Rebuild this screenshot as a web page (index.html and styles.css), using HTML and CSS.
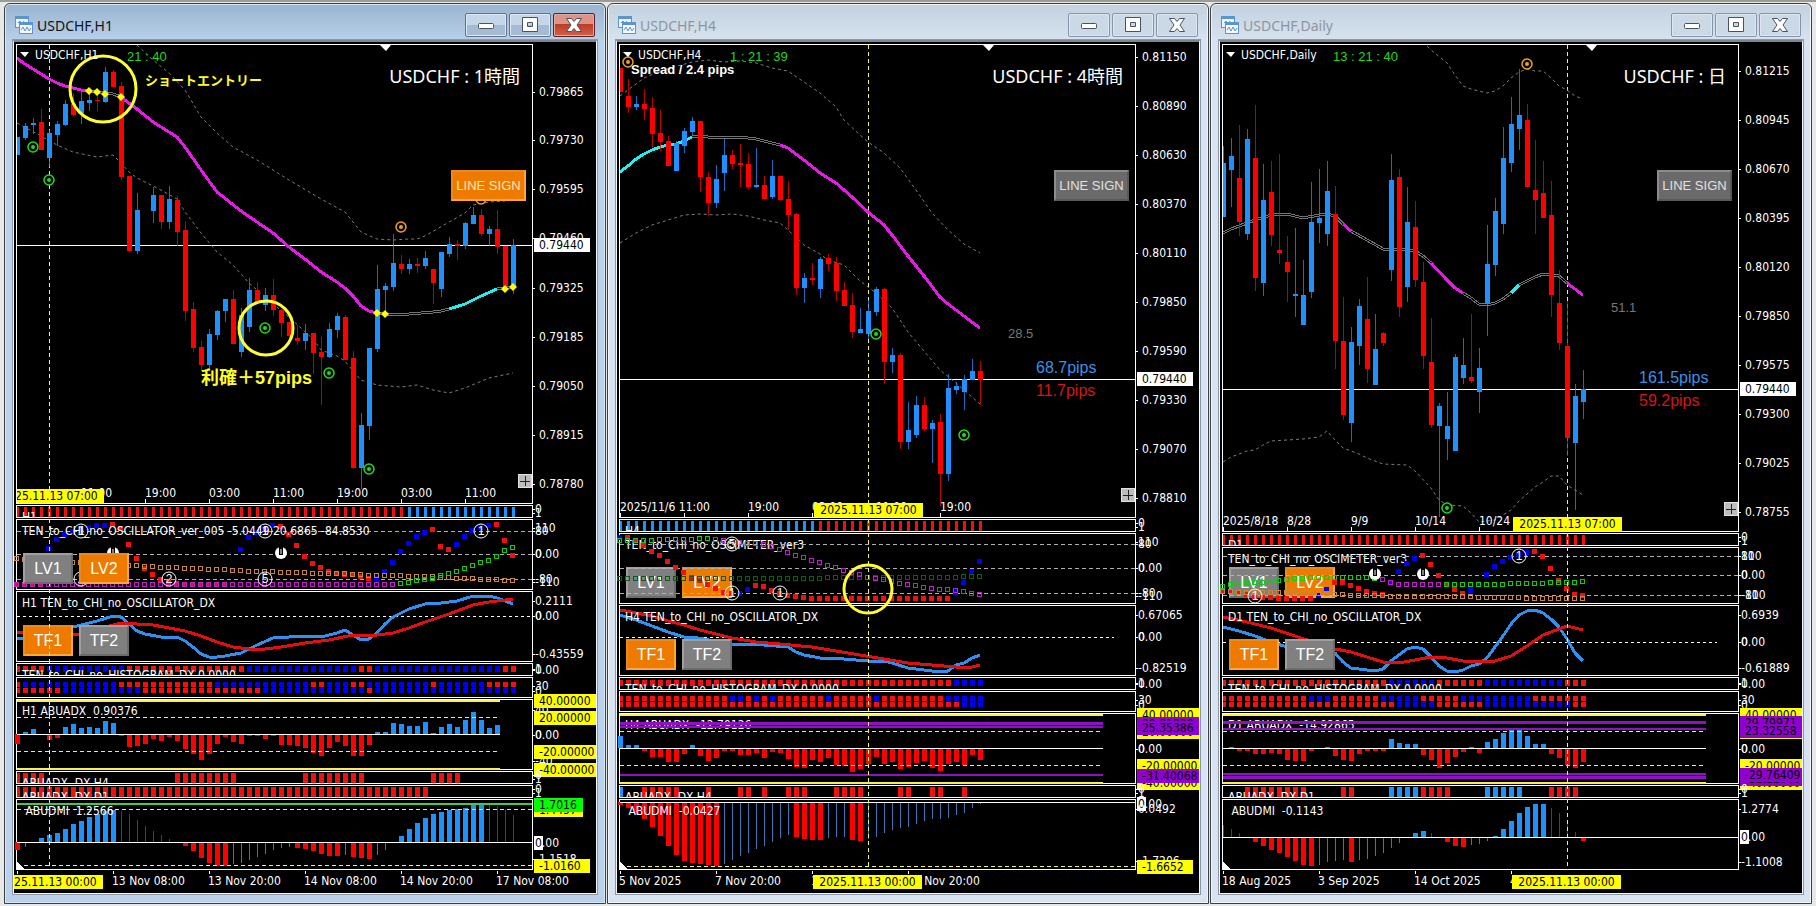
FILE: index.html
```html
<!DOCTYPE html>
<html lang="ja">

<head>
    <meta charset="UTF-8">
    <meta name="viewport" content="width=device-width, initial-scale=1.0">
    <title>USDCHF</title>
    <link rel="stylesheet" href="styles.css">
</head>

<body>
    <svg class="symbols" width="0" height="0" aria-hidden="true">
        <symbol id="icon-chart" viewBox="0 0 18 18">
            <rect x="0.5" y="0.5" width="13" height="11" fill="#eef5fd" stroke="#5b93d3" />
            <rect x="0" y="0" width="14" height="3" fill="#5b93d3" />
            <path d="M3 7l2-2 2 3 2-3" fill="none" stroke="#5b93d3" />
            <rect x="4.5" y="6.5" width="13" height="11" fill="#f6faff" stroke="#5b93d3" />
            <rect x="4" y="6" width="14" height="3" fill="#5b93d3" />
            <path d="M6 14l2-3 2 4 2-4 2 4 2-3" fill="none" stroke="#5b93d3" />
        </symbol>
        <symbol id="icon-min" viewBox="0 0 18 18">
            <rect x="1.5" y="7.5" width="15" height="5" rx="1" fill="#fff" stroke="#4a5262" />
        </symbol>
        <symbol id="icon-max" viewBox="0 0 18 18">
            <path d="M1.500 1.500h15v14h-15zM6.500 6.500v4h5v-4z" fill="#fff" fill-rule="evenodd" stroke="#4a5262" />
        </symbol>
        <symbol id="icon-close" viewBox="0 0 18 18">
            <path d="M1.500 2.500h5l2.500 3 2.500-3h5l-4.500 6.500 4.500 6.500h-5l-2.500-3-2.500 3h-5l4.500-6.500z" fill="#fff" stroke="#4a5262" stroke-linejoin="round" />
        </symbol>
    </svg>

    <main class="desktop">
        <section class="window active">
            <header class="titlebar">
                <svg class="app-icon"><use href="#icon-chart" /></svg>
                <h2>USDCHF,H1</h2>
                <div class="window-buttons">
                    <button type="button" aria-label="Minimize"><svg><use href="#icon-min" /></svg></button>
                    <button type="button" aria-label="Maximize"><svg><use href="#icon-max" /></svg></button>
                    <button type="button" class="close" aria-label="Close"><svg><use href="#icon-close" /></svg></button>
                </div>
            </header>
            <div class="chart" id="chart-h1"></div>
        </section>

        <section class="window">
            <header class="titlebar">
                <svg class="app-icon"><use href="#icon-chart" /></svg>
                <h2>USDCHF,H4</h2>
                <div class="window-buttons">
                    <button type="button" aria-label="Minimize"><svg><use href="#icon-min" /></svg></button>
                    <button type="button" aria-label="Maximize"><svg><use href="#icon-max" /></svg></button>
                    <button type="button" class="close" aria-label="Close"><svg><use href="#icon-close" /></svg></button>
                </div>
            </header>
            <div class="chart" id="chart-h4"></div>
        </section>

        <section class="window">
            <header class="titlebar">
                <svg class="app-icon"><use href="#icon-chart" /></svg>
                <h2>USDCHF,Daily</h2>
                <div class="window-buttons">
                    <button type="button" aria-label="Minimize"><svg><use href="#icon-min" /></svg></button>
                    <button type="button" aria-label="Maximize"><svg><use href="#icon-max" /></svg></button>
                    <button type="button" class="close" aria-label="Close"><svg><use href="#icon-close" /></svg></button>
                </div>
            </header>
            <div class="chart" id="chart-d1"></div>
        </section>
    </main>

    <script src="data.js"></script>
    <script src="chart.js"></script>
</body>

</html>
```
FILE: styles.css
```css
* {
    box-sizing: border-box;
}

body {
    margin: 0;
    font-family: "DejaVu Sans Condensed", "Noto Sans", "Noto Sans CJK JP", sans-serif;
    font-size: 12px;
    color: #fff;
    background-color: #e8e8e6;
    border-top: 2px solid #9c9c96;
}

.symbols {
    position: absolute;
}

.desktop {
    display: grid;
    grid-template-columns: repeat(3, 1fr);
    gap: 1px;
    min-height: calc(100vh - 2px);
    padding: 1px 4px 2px;
}

/* window frame */

.window {
    display: flex;
    flex-direction: column;
    min-width: 0;
    padding: 0 8px 9px;
    background-color: #d7e3f0;
    border: 1px solid #3c3f44;
    border-radius: 6px 6px 0 0;
    background-image: linear-gradient(#c3d0de, #d7e3f0 38px);
    box-shadow: inset 0 0 0 1px #f0f5fa;
}

.window.active {
    background-color: #b9d1ea;
    background-image: linear-gradient(#9ab4d0, #b9d1ea 38px);
    box-shadow: inset 0 0 0 1px #d9e8f6;
}

.titlebar {
    display: flex;
    align-items: center;
    height: 36px;
    padding: 6px 2px 0 2px;
}

.app-icon {
    width: 18px;
    height: 18px;
}

.titlebar h2 {
    flex: 1;
    margin: 0 0 0 4px;
    font-family: "Noto Sans", sans-serif;
    font-size: 14px;
    font-weight: normal;
    color: #8d969f;
}

.active .titlebar h2 {
    color: #101418;
}

.window-buttons {
    display: flex;
    gap: 2px;
}

.window-buttons button {
    display: flex;
    align-items: center;
    justify-content: center;
    width: 42px;
    height: 24px;
    padding: 0;
    background: #cbd8e6;
    border: 1px solid #8595aa;
    border-radius: 2px;
    box-shadow: inset 0 0 0 1px #dfe8f2;
}

.active .window-buttons button {
    background: linear-gradient(#c4d6e8 50%, #a3bbd4 50%);
    border-color: #60738e;
}

.active .window-buttons .close {
    background: linear-gradient(#dc9488 45%, #bc3a26 45%, #cf6248);
    border-color: #5e2024;
    box-shadow: inset 0 0 0 1px #e2a79d;
}

.window-buttons svg {
    width: 18px;
    height: 18px;
}

/* chart area */

.chart {
    position: relative;
    flex: 1;
    display: flex;
    flex-direction: column;
    gap: 1px;
    padding: 2px 0 0 2px;
    background-color: #000;
    border: 1px solid #f4f8fc;
    border-top: 2px solid #7d858f;
    outline: 1px solid #8d98a6;
    overflow: hidden;
}

.indicators {
    position: relative;
    display: flex;
    flex-direction: column;
    gap: 1px;
}

.panel {
    display: grid;
    grid-template-columns: 1fr 63px;
}

.panel.price {
    flex: 1;
}

.plot {
    position: relative;
    min-width: 0;
    border: 1px solid #fff;
}

.price .plot,
.strip .plot {
    overflow: hidden;
}

.plot svg,
.scale svg,
.time-axis svg {
    position: absolute;
    top: 0;
    left: 0;
    width: 100%;
    height: 100%;
    overflow: visible;
    pointer-events: none;
}

.scale,
.time-axis {
    position: relative;
}

.time-axis {
    height: 22px;
}

.times {
    position: absolute;
    left: 0;
    right: 0;
    bottom: 0;
    height: 14px;
}

.panel-title {
    position: absolute;
    top: 2px;
    left: 5px;
    line-height: 18px;
    white-space: pre;
}

.pair-name {
    position: absolute;
    top: 18px;
    right: 12px;
    font-family: "Noto Sans", "Noto Sans CJK JP", sans-serif;
    font-size: 18px;
    line-height: 26px;
}

.crosshair {
    position: absolute;
    top: 0;
    bottom: 0;
    width: 1px;
    z-index: 2;
    background: repeating-linear-gradient(#f4f46a 0 4px, transparent 4px 7px);
}

.time-tag {
    position: absolute;
    z-index: 3;
    bottom: 0;
    width: 109px;
    line-height: 14px;
    text-align: center;
    white-space: nowrap;
    color: #000;
    background-color: #ff0;
}

.time-axis .time-tag {
    bottom: 4px;
}

/* buttons on the chart */

.chart-button {
    width: 50px;
    height: 31px;
    padding: 0;
    font-family: "Liberation Sans", sans-serif;
    font-size: 16px;
    color: #fff;
    background-color: #808080;
    border: 2px solid;
    border-color: #a0a0a0 #6c6c6c #6c6c6c #a0a0a0;
}

.chart-button.on {
    background-color: #ee7b00;
    border-color: #e88a1c #ffa836 #ffa836 #e88a1c;
}

.controls {
    position: absolute;
    left: 6px;
    bottom: 5px;
    z-index: 1;
    display: flex;
    gap: 6px;
}

.controls.front {
    z-index: 3;
}

.controls.back {
    z-index: auto;
}

.line-sign {
    position: absolute;
    top: 125px;
    right: 6px;
    width: 75px;
    font-size: 13px;
    color: #e0e0e0;
    background-color: #6a6a6a;
    border-color: #8c8c8c #585858 #585858 #8c8c8c;
}

.line-sign.on {
    color: #ffe6b8;
}

.expand {
    position: absolute;
    right: 0;
    bottom: 15px;
    width: 14px;
    height: 14px;
    padding: 0;
    border: 1px solid #e0e0e0;
    background: linear-gradient(#222, #222) center / 10px 1px no-repeat,
        linear-gradient(#222, #222) center / 1px 10px no-repeat, #bdbdbd;
}

/* svg text */

text {
    fill: #fff;
    white-space: pre;
}

.on-tag {
    fill: #000;
}

.countdown {
    font: 13px "Liberation Sans", sans-serif;
    fill: #22d822;
}

.spread {
    font: bold 13px "Liberation Sans", sans-serif;
}

.strength {
    font: 13px "Liberation Sans", sans-serif;
    fill: #787878;
}

.pips-up,
.pips-down {
    font: 16px "Liberation Sans", sans-serif;
    fill: #3a90e8;
}

.pips-down {
    fill: #d81414;
}

.entry,
.profit {
    font: bold 13px "Noto Sans CJK JP", sans-serif;
    fill: #ffff20;
}

.profit {
    font: bold 18px "Liberation Sans", "Noto Sans CJK JP", sans-serif;
}

.mark {
    font: 12px "Liberation Sans", sans-serif;
    text-anchor: middle;
}
```
FILE: data.js
```js
// Levels are counted downwards, three steps to a pixel.
// Candles: direction, high, body top, body bottom, low.
// Runs: "r4 b10 .2" is four red bars, ten blue bars, two empty ones.

const charts = [
    {
        id: 'chart-h1',
        name: 'USDCHF,H1',
        pair: 'USDCHF : 1時間',
        countdown: '21 : 40',
        lineSign: true,
        cross: 4,
        price: 736,
        candles: `u 411 411 464 464,u 368 378 413 420,u 354 370 374 402,d 327 366 450 450,u 390 399 474 500,
            u 363 372 405 438,u 301 312 375 378,d 278 312 345 348,u 275 303 339 372,u 280 300 308 333,
            d 283 300 303 333,u 201 216 305 308,d 210 216 261 261,d 246 258 531 540,d 528 528 753 756,
            u 579 630 753 762,,u 561 585 633 669,d 585 585 665 687,u 558 597 665 687,d 588 600 696 738,
            d 663 690 933 963,d 906 927 1044 1056,d 1023 1041 1095 1113,u 987 1002 1095 1113,u 930 933 1005 1020,
            u 897 897 933 966,d 870 897 1032 1032,u 924 945 1056 1071,u 834 870 981 995,d 846 870 906 910,
            u 864 885 915 933,d 837 885 930 948,d 927 930 969 1011,d 966 966 1008 1023,d 975 1014 1023 1035,
            u 972 999 1023 1050,d 999 999 1059 1122,d 1011 1056 1071 1215,u 969 987 1071 1074,u 939 948 990 1014,
            d 945 951 1080 1080,d 1053 1074 1404 1407,u 1239 1275 1404 1467,u 1044 1044 1278 1320,u 795 867 1047 1056,
            u 850 858 870 940,u 702 788 861 873,d 765 792 807 822,u 777 792 807 822,d 774 792 797 819,
            u 753 774 798 807,d 807 807 849 912,u 757 757 867 891,u 711 733 762 770,d 720 732 739 780,
            u 666 669 738 747,u 621 645 672 672,d 627 645 702 708,u 678 687 702 738,d 630 687 741 762,
            d 738 738 861 870,u 717 735 858 882`,
        average: [
            ['m', '0:175 1:192 2:207 3:222 4:237 5:250 6:258 7:265 8:270 9:273'],
            ['g', '9:273 10:277 11:280 12:281 13:292'],
            ['m', '13:292 15:328 17:367 20:410 21:440 23:510 25:575 28:633 32:700 34:742 36:776 38:817 40:845 41:863 42:888 43:917 44:933 45:938'],
            ['g', '45:938 46:943 49:941 52:937 53:932 54:926'],
            ['c', '54:926 56:912 58:888 60:868'],
            ['g', '60:868 62:861']
        ],
        bands: [
            '15:135 17:180 19:220 21:270 23:352 25:400 27:440 30:480 34:540 38:598 41:635 42:665 43:695 45:718 47:720 49:716 50:718 51:708 54:665 56:640 57:615 59:605 61:603',
            '0:370 3:408 5:435 7:457 10:470 12:466 13:490 14:515 15:533 18:570 20:596 21:635 23:700 25:755 27:795 29:850 31:890 34:950 37:1018 38:1050 40:1067 41:1082 42:1113 43:1140 45:1155 48:1161 50:1155 52:1170 54:1178 56:1165 59:1135 62:1120'
        ],
        diamonds: '9:273 10:276 11:281 13:292 45:938 46:943 61:866 62:860',
        buys: '2:441 4:540 31:984 39:1119 44:1407',
        sells: '48:681 58:596',
        rings: [[86, 44, 33], [249, 283, 27]],
        notes: [
            [128, 35, 'ショートエントリー', 'entry'],
            [184, 334, '利確＋57pips', 'profit']
        ],
        prices: [[275, '0.79865'], [421, '0.79730'], [568, '0.79595'], [714, '0.79460'], [863, '0.79325'],
            [1012, '0.79185'], [1159, '0.79050'], [1306, '0.78915'], [1453, '0.78780']],
        times: [[8, '11:00'], [16, '19:00'], [24, '03:00'], [32, '11:00'], [40, '19:00'], [48, '03:00'], [56, '11:00']],
        dates: [[0, ''], [12, '13 Nov 08:00'], [24, '13 Nov 20:00'], [36, '14 Nov 08:00'], [48, '14 Nov 20:00'], [60, '17 Nov 08:00']],
        panels: [
            { type: 'strip', height: 13, title: 'H1', barWidth: 3, runs: 'r49 b14' },
            {
                type: 'levels', height: 71, top: 60, title: 'TEN_to_CHI_no_OSCILLATOR_ver_005 -5.0449 20.6865 -84.8530',
                buttons: ['LV1', 'LV2*'], stack: 'front', dashed: [92, 163, 238],
                hollow: [
                    ['m48 .15', '0:256 62:256'],
                    ['o63', '0:178 8:190 16:200 20:205 25:210 30:216 36:220 40:222 45:228 50:230 55:236 60:241 62:244'],
                    ['.48 n15', '48:253 49:248 51:240 52:236 53:228 54:222 55:215 56:208 57:199 58:190 59:182 60:170 61:154 62:145']
                ],
                dots: ['r4 b8 r15 b6 r12 b7 r3 b5 r3', [256, 256, 256, 256, 148, 121, 105, 95, 90, 85, 78, 77, 76, 88, 136, 178, 208, 226, 240, 248,
                    253, 256, 256, 256, 256, 256, 256, 213, 151, 115, 98, 88, 78, 80, 106, 139, 170, 191, 205, 216,
                    222, 226, 226, 230, 238, 236, 216, 190, 157, 133, 112, 100, 91, 142, 151, 136, 112, 94, 85, 77, 76, 124, 169]],
                marks: [[8, 92, 1], [31, 92, 1], [58, 92, 1], [8, 238, 2], [19, 238, 2], [31, 238, 5]],
                turns: '12:158 33:160',
                scale: [[85, '110'], [92, '80'], [163, '0.00'], [163, '0'], [238, '-80'], [245, '-110']]
            },
            {
                type: 'curves', height: 71, top: 276, title: 'H1 TEN_to_CHI_no_OSCILLATOR_DX',
                buttons: ['TF1*', 'TF2'], zero: 347,
                blue: '0:418 4:405 7:382 8:376 10:362 12:347 13:352 14:372 15:392 16:402 18:412 20:412 21:422 22:442 23:462 24:470 25:472 26:468 28:458 30:436 32:415 34:410 36:407 38:412 40:400 41:391 42:405 43:421 44:418 45:400 46:372 47:352 49:328 51:311 53:309 55:302 57:289 59:289 60:293 61:303 62:311',
                red: '0:395 7:404 8:402 12:375 13:370 15:371 17:376 19:384 21:394 23:408 25:426 27:441 29:448 31:448 33:441 36:428 39:420 42:406 45:405 47:400 49:385 51:366 54:342 57:314 59:305 61:300 62:297',
                scale: [[303, '0.2111'], [347, '0.00'], [347, '0'], [461, '-0.43559']]
            },
            { type: 'squares', height: 13, title: 'TEN_to_CHI_no_HISTOGRAM_DX 0.0000', rows: ['r4 b10 r15 b14 r2 b16 r2'] },
            { type: 'squares', height: 21, title: '', rows: ['r1 b12 r12 b12 r2 b3 r2 b8 r1 b6 r4', 'r6 b10 r15 b13 r1 b18'] },
            {
                type: 'bars', height: 71, top: 30, title: 'H1 ABUADX  0.90376', zero: 133, span: 483,
                yellow: [30, 235], dashed: [82, 184],
                bars: [161, 126, 117, 0, 150, 144, 111, 102, 114, 111, 114, 93, 99, 137, 171, 168, 162, 147, 153, 141, 153,
                    177, 192, 210, 192, 162, 141, 156, 162, 138, 138, 147, 138, 165, 165, 168, 174, 189, 198, 174, 156,
                    168, 198, 198, 165, 126, 126, 99, 102, 108, 108, 96, 129, 111, 102, 111, 90, 66, 90, 114, 105],
                scale: [[60, '40'], [212, '-40'], [34, '40.00000', 'yellow'], [84, '20.00000', 'yellow'], [134, '0.00'], [134, '0'],
                    [187, '-20.00000', 'yellow'], [240, '-40.00000', 'yellow']]
            },
            { type: 'strip', height: 13, title: 'ABUADX  DX H4', barWidth: 5, runs: 'r4 .16 r8 .8 r8 .8 r4 .7' },
            { type: 'strip', height: 13, title: 'ABUADX  DX D1', barWidth: 5, runs: 'r52' },
            {
                type: 'bars', height: 71, top: 330, title: ' ABUDMI  1.2566', zero: 457, corner: true,
                green: [342], dashed: [358, 526],
                bars: [480, 472, 0, 444, 435, 429, 417, 402, 393, 381, 372, 362, 359, 363, 373, 390, 408, 423, 435, 447, 0,
                    467, 483, 504, 519, 527, 527, 521, 519, 510, 500, 492, 480, 473, 472, 474, 477, 483, 492, 498, 498,
                    495, 501, 504, 507, 495, 480, 0, 438, 417, 399, 384, 372, 366, 361, 358, 354, 344, 342, 346, 348, 358, 375],
                thin: [[1, 1], [13, 19], [27, 34], [41, 41], [45, 46], [59, 62]],
                scale: [[360, '1.4457', 'yellow'], [345, '1.7016', 'green'], [458, '0.00', 'zero'],
                    [507, '-1.1518'], [529, '-1.0160', 'yellow']]
            }
        ]
    },
    {
        id: 'chart-h4',
        name: 'USDCHF,H4',
        pair: 'USDCHF : 4時間',
        countdown: '1 : 21 : 39',
        cross: 31,
        price: 1138,
        candles: `d 204 204 276 276,d 237 288 321 338,u 288 312 321 330,d 267 312 327 360,d 291 324 402 444,
            d 330 399 426 452,d 408 423 498 498,u 423 430 513 513,u 384 393 438 459,u 351 363 396 405,
            d 363 363 531 576,d 516 531 609 648,u 495 537 609 624,u 417 465 519 573,d 450 465 492 507,
            d 432 489 494 561,d 459 492 561 567,u 444 555 560 564,d 528 555 597 597,u 480 528 591 597,
            d 528 528 600 603,d 543 597 645 690,d 639 642 864 885,u 819 834 864 909,d 789 834 840 855,
            u 771 777 867 894,d 761 774 792 813,d 771 789 873 903,d 846 870 918 918,d 879 915 996 1014,
            u 924 987 999 999,u 900 933 1002 1017,u 861 867 936 948,d 864 867 1086 1152,u 1044 1065 1086 1119,
            d 1059 1065 1326 1347,u 1206 1290 1326 1347,u 1188 1215 1305 1314,d 1191 1215 1287 1293,u 1260 1269 1287 1389,
            d 1242 1266 1422 1517,u 1122 1164 1422 1443,u 1146 1158 1170 1182,u 1125 1137 1176 1230,u 1077 1113 1140 1140,
            d 1083 1113 1140 1215`,
        average: [
            ['c', '0:516 1:497 2:478 3:462 4:450 5:441 6:435 7:431 8:423 9:412'],
            ['g', '9:412 10:409 11:412 15:412 17:417 19:428 20:434'],
            ['m', '20:434 21:445 23:480 25:518 27:548 29:592 31:635 33:675 34:705 36:768 38:828 40:892 41:913 43:947 45:983']
        ],
        bands: [
            '0:288 1:270 2:252 3:235 5:213 9:187 11:181 13:185 15:182 17:188 19:205 21:212 23:245 25:280 27:320 28:360 30:405 31:425 33:460 35:505 37:570 39:640 41:690 43:732 45:760',
            '0:730 2:698 4:675 6:660 8:645 10:641 12:645 14:642 16:648 18:660 20:670 21:690 23:735 25:763 26:780 28:795 30:843 32:880 34:925 36:995 38:1052 40:1110 42:1150 44:1190 45:1212'
        ],
        diamonds: '',
        buys: '32:1002 43:1305',
        sells: '1:186',
        rings: [],
        notes: [
            [11, 24, 'Spread / 2.4 pips', 'spread'],
            [388, 288, '28.5', 'strength'],
            [416, 323, '68.7pips', 'pips-up'],
            [416, 346, '11.7pips', 'pips-down']
        ],
        prices: [[172, '0.81150'], [319, '0.80890'], [466, '0.80630'], [613, '0.80370'], [760, '0.80110'],
            [907, '0.79850'], [1054, '0.79590'], [1201, '0.79330'], [1348, '0.79070'], [1495, '0.78810']],
        times: [[0, '2025/11/6 11:00'], [8, ''], [16, '19:00'], [24, '03:00'], [32, '11:00'], [40, '19:00']],
        dates: [[0, '5 Nov 2025'], [12, '7 Nov 20:00'], [24, '11 Nov 04:00'], [36, '12 Nov 20:00']],
        panels: [
            { type: 'strip', height: 13, title: 'H4', barWidth: 3, runs: 'b25 r21' },
            {
                type: 'levels', height: 71, top: 72, title: 'TEN_to_CHI_no_OSCIMETER_ver3', under: true,
                buttons: ['LV1', 'LV2*'], stack: 'back', dashed: [103, 175, 250],
                hollow: [
                    ['k46', '0:208 24:208 26:205 42:205 43:202 45:202'],
                    ['n12 m34', '0:94 3:94 5:91 7:89 11:88 12:89 13:92 14:95 15:98 16:101 18:104 19:112 20:121 21:128 22:137 24:152 27:175 29:188 31:203 33:211 36:226 39:236 42:244 43:247 44:252 45:256']
                ],
                dots: ['b1 r14 b2 r25 b4', [85, 84, 92, 108, 125, 139, 157, 175, 190, 203, 213, 224, 236, 248, 252, 252, 241, 229, 232, 243, 252, 257, 262, 265,
                    268, 268, 268, 268, 268, 268, 268, 268, 268, 268, 268, 268, 268, 268, 268, 268, 268, 268, 250, 220, 187, 157]],
                marks: [[14, 103, 5], [14, 250, 1], [20, 250, 1]],
                turns: '',
                ring: [248, 237, 24],
                scale: [[97, '110'], [103, '80'], [175, '0.00'], [175, '0'], [250, '-80'], [257, '-110']]
            },
            {
                type: 'curves', height: 71, top: 288, title: 'H4 TEN_to_CHI_no_OSCILLATOR_DX',
                buttons: ['TF1*', 'TF2'], zero: 382, span: 494,
                blue: '0:315 2:330 4:347 6:365 8:380 9:382 14:403 18:405 21:410 22:425 23:435 25:444 28:447 31:454 33:452 34:458 36:475 38:480 40:485 41:482 42:466 43:458 44:443 45:434',
                red: '0:301 2:308 4:318 6:332 8:345 10:360 12:373 14:384 17:395 20:402 24:411 27:423 30:435 33:446 36:458 39:465 42:471 44:470 45:466',
                scale: [[314, '0.67065'], [382, '0.00'], [382, '0'], [473, '-0.82519']]
            },
            { type: 'squares', height: 13, title: 'TEN_to_CHI_no_HISTOGRAM_DX 0.0000', rows: ['r42 b4'] },
            { type: 'squares', height: 21, title: '', rows: ['r14 b2 r1 b1 r1 b1 r6 b1 r5 b1 r8 b5', 'r43 b3'] },
            {
                type: 'bars', height: 71, top: 72, title: 'H4 ABUADX  -12.79126', under: true, zero: 175, span: 483,
                yellow: [72, 276], dashed: [124, 226], purple: [[100, 3], [111, 2], [255, 2]],
                bars: [138, 166, 166, 182, 201, 201, 216, 216, 192, 166, 198, 213, 204, 183, 183, 195, 195, 189, 204, 186, 189, 207, 231,
                    234, 210, 216, 204, 225, 228, 246, 237, 222, 201, 222, 216, 237, 231, 219, 213, 234, 243, 222, 216, 225, 195, 210],
                scale: [[75, '40.00000', 'yellow'], [126, '20.00000', 'yellow'], [103, '29.31220', 'purple'], [115, '25.35386', 'purple'],
                    [176, '0.00'], [176, '0'], [227, '-20.00000', 'yellow'], [278, '-40.00000', 'yellow'], [259, '-31.40068', 'purple']]
            },
            { type: 'strip', height: 13, title: 'ABUADX  DX H4', barWidth: 5, runs: 'b1 .2 r5 .3 r1 .3 r2 .1 r1 .2 r3 .3 r4 .4 r2 .2 r2 .2 r1 .2' },
            {
                type: 'bars', height: 71, top: 330, title: ' ABUDMI  -0.0427', zero: 337, corner: true, dashed: [529],
                bars: [345, 355, 372, 387, 411, 438, 468, 495, 513, 519, 522, 525, 528, 522, 510, 498, 489, 477, 468, 456, 444, 435, 441,
                    447, 450, 450, 444, 441, 441, 450, 453, 447, 441, 429, 420, 414, 411, 402, 393, 387, 387, 384, 375, 369, 354, 342],
                thin: [[13, 21], [26, 28], [31, 45]],
                scale: [[343, '0.00', 'zero'], [356, '0.0492'], [512, '-1.7206'], [530, '-1.6652', 'yellow']]
            }
        ]
    },
    {
        id: 'chart-d1',
        name: 'USDCHF,Daily',
        pair: 'USDCHF : 日',
        countdown: '13 : 21 : 40',
        cross: 43,
        price: 1168,
        candles: `u 438 489 651 651,u 414 468 510 621,d 375 534 666 708,u 387 417 702 720,d 315 474 834 873,
            u 492 600 849 888,d 483 576 705 738,d 462 750 759 792,d 708 786 816 906,u 684 882 888 951,
            u 780 885 975 975,u 546 666 876 894,u 507 654 669 729,u 483 573 702 738,d 558 642 1023 1107,
            d 891 1023 1245 1260,u 981 1026 1269 1326,u 897 918 1038 1095,d 831 957 1107 1149,u 942 1047 1155 1155,
            d 996 999 1029 1038,u 462 540 810 843,d 507 531 921 951,u 561 666 861 906,d 603 681 840 861,
            d 787 846 1068 1107,d 954 1086 1275 1284,u 1209 1218 1278 1550,u 1176 1278 1317 1380,u 1062 1071 1353 1353,
            u 1014 1095 1134 1152,d 942 1131 1143 1149,u 1044 1104 1176 1239,u 675 792 912 1008,u 594 633 795 828,
            u 381 474 672 702,u 291 372 489 516,u 207 345 387 450,d 312 360 561 561,d 420 570 600 702,
            d 483 579 654 654,d 543 645 885 951,d 810 909 1029 1050,d 903 1038 1314 1368,u 1152 1188 1329 1530,
            u 1110 1167 1206 1257`,
        average: [
            ['g', '0:700 1:686 2:678 4:660 6:646 8:643 10:655 12:645 13:643 14:648 15:672'],
            ['m', '15:672 16:692'],
            ['g', '16:692 18:720 20:747 23:749 24:752 25:768 26:790'],
            ['m', '26:790 28:840 29:865 30:880'],
            ['g', '30:880 31:895 32:911 33:914 34:910 35:897 36:880'],
            ['c', '36:880 37:855'],
            ['g', '37:855 39:830 40:823 41:824 42:828 43:850'],
            ['m', '43:850 44:868 45:885']
        ],
        bands: [
            '25:125 26:150 28:190 29:225 30:258 31:268 33:280 34:273 35:258 36:235 37:215 38:206 39:212 40:212 41:235 42:258 43:270 44:288 45:297',
            '0:1387 1:1370 2:1363 3:1352 4:1350 5:1335 6:1322 8:1319 10:1318 12:1310 13:1292 14:1320 15:1345 17:1362 18:1375 20:1393 23:1396 24:1412 26:1465 27:1500 28:1515 30:1517 31:1540 32:1565 34:1560 36:1530 37:1503 39:1460 40:1447 41:1427 42:1427 43:1455 45:1485'
        ],
        diamonds: '',
        buys: '28:1523',
        sells: '38:192',
        rings: [],
        notes: [
            [388, 262, '51.1', 'strength'],
            [416, 333, '161.5pips', 'pips-up'],
            [416, 356, '59.2pips', 'pips-down']
        ],
        prices: [[214, '0.81215'], [361, '0.80945'], [508, '0.80670'], [655, '0.80395'], [802, '0.80120'],
            [949, '0.79850'], [1096, '0.79575'], [1243, '0.79300'], [1390, '0.79025'], [1537, '0.78755']],
        times: [[0, '2025/8/18'], [8, '8/28'], [16, '9/9'], [24, '10/14'], [32, '10/24'], [40, '']],
        dates: [[0, '18 Aug 2025'], [12, '3 Sep 2025'], [24, '14 Oct 2025'], [36, '4 Nov 2025']],
        panels: [
            { type: 'strip', height: 13, title: 'D1', barWidth: 3, runs: 'r46' },
            {
                type: 'levels', height: 57, top: 84, title: 'TEN_to_CHI_no_OSCIMETER_ver3', under: true,
                buttons: ['LV1', 'LV2*'], stack: 'back', dashed: [109, 166, 226],
                hollow: [
                    ['o46', '0:217 8:219 12:222 16:227 20:229 25:232 31:232 37:235 43:238 45:238'],
                    ['n20 m8 n18', '0:200 1:196 3:190 5:188 7:183 9:178 11:175 18:175 19:178 20:181 21:189 22:196 27:196 28:195 34:195 36:193 40:193 41:190 43:190 45:187']
                ],
                dots: ['r12 b2 r7 b4 r6 b8 r7', [216, 217, 218, 225, 230, 233, 235, 236, 237, 238, 238, 238, 229, 211, 190, 190, 199, 208, 216, 222, 225, 190, 157,
                    133, 117, 108, 136, 169, 196, 211, 222, 214, 193, 166, 142, 125, 115, 105, 98, 97, 110, 148, 184, 208, 225, 229]],
                marks: [[4, 228, 1], [37, 109, 1]],
                turns: '19:163 25:163',
                scale: [[109, '110'], [109, '80'], [166, '0.00'], [166, '0'], [226, '-110'], [226, '-80']]
            },
            {
                type: 'curves', height: 71, top: 258, title: 'D1 TEN_to_CHI_no_OSCILLATOR_DX',
                buttons: ['TF1*', 'TF2'], zero: 367, span: 494,
                blue: '0:322 2:334 4:348 6:365 8:380 14:398 15:425 16:445 18:449 19:452 20:448 21:422 22:405 23:388 24:380 25:386 26:410 27:437 28:452 29:455 30:450 31:438 32:432 33:415 34:380 35:348 36:312 37:285 38:272 39:271 40:278 41:296 42:320 43:358 44:400 45:422',
                red: '0:292 3:305 6:325 9:348 14:386 16:397 18:412 20:425 22:428 24:421 26:411 28:413 30:423 32:427 34:424 36:407 38:377 40:345 42:326 43:319 44:324 45:331',
                scale: [[285, '0.6939'], [367, '0.00'], [367, '0'], [443, '-0.61889']]
            },
            { type: 'squares', height: 13, title: 'TEN_to_CHI_no_HISTOGRAM_DX 0.0000', rows: ['r21 b6 r6 b10 r3'] },
            { type: 'squares', height: 21, title: '', rows: ['r11 b3 r6 b5 r5 b9 r7', 'r22 b5 r6 b11 r2'] },
            {
                type: 'bars', height: 71, top: 72, title: 'D1 ABUADX  -14.92865', under: true, zero: 175, span: 483,
                yellow: [72, 276], dashed: [124, 226], purple: [[97, 3], [117, 2], [252, 2], [262, 3]],
                bars: [0, 171, 182, 182, 192, 192, 189, 192, 210, 213, 213, 183, 0, 171, 198, 210, 213, 192, 183, 183, 183, 147, 159,
                    162, 162, 195, 210, 234, 219, 201, 186, 171, 189, 156, 147, 129, 120, 120, 138, 162, 162, 192, 204, 225, 234, 216],
                scale: [[75, '40.00000', 'yellow'], [126, '20.00000', 'yellow'], [99, '29.79971', 'purple'], [122, '23.32558', 'purple'],
                    [176, '0.00'], [176, '0'], [227, '-20.00000', 'yellow'], [278, '-40.00000', 'yellow'], [266, '-32.12040', 'purple'], [256, '-29.76409', 'purple']]
            },
            { type: 'strip', height: 13, title: 'ABUADX  DX D1', barWidth: 5, runs: '.3 r8 .4 r2 .4 b4 r4 .4 b5 .3 r4 .1' },
            {
                type: 'bars', height: 71, top: 330, title: ' ABUDMI  -0.1143', zero: 442, corner: true,
                bars: [405, 417, 429, 0, 456, 468, 480, 489, 501, 513, 525, 528, 525, 516, 513, 510, 516, 510, 507, 498, 489, 474, 459,
                    0, 429, 423, 429, 0, 456, 468, 471, 465, 462, 453, 437, 417, 393, 369, 351, 342, 342, 354, 369, 399, 426, 453],
                thin: [[0, 2], [12, 15], [17, 22], [26, 26], [31, 33], [41, 44]],
                scale: [[356, '1.2774'], [442, '0.00', 'zero'], [515, '-1.1008']]
            }
        ]
    }
];
```
FILE: chart.js
```js
const STEP = 8;
const PRICE_TOP = 135;
const UP = '#2090ff';
const DOWN = '#ff0000';
const COLORS = {
    r: '#f01010', b: '#0000f0', m: '#c020c8', n: '#18c818', k: '#0c5c1c', o: '#c8883c'
};
const AVERAGE = { m: '#e818e8', c: '#20f0f0', g: '#747474' };
const TAGS = { yellow: '#ffff00', green: '#00ff00', purple: '#9000d0', white: '#ffffff' };

const level = (v, top) => Math.round((v - top) / 3);

function pairs(text) {
    return text.split(' ').filter(Boolean).map(p => p.split(':').map(Number));
}

function runs(text) {
    return text.split(' ').flatMap(r => Array(Number(r.slice(1))).fill(r[0]));
}

function rect(x, y, w, h, fill) {
    return `<rect x="${x}" y="${y}" width="${w}" height="${h}" fill="${fill}"/>`;
}

function label(x, y, text, cls = '', size = 12) {
    return `<text x="${x}" y="${y + Math.round(size * 0.36)}" class="${cls}">${text}</text>`;
}

function line(points, top, color, width, extra = '') {
    const d = pairs(points).map(([b, v]) => `${b * STEP},${level(v, top)}`).join(' ');
    return `<polyline points="${d}" fill="none" stroke="${color}" stroke-width="${width}" ${extra}/>`;
}

function hline(y, width, color, thick = 1, dash = '') {
    const offset = thick % 2 ? y + 0.5 : y;
    return `<line x1="0" x2="${width || '100%'}" y1="${offset}" y2="${offset}" stroke="${color}" stroke-width="${thick}" stroke-dasharray="${dash}"/>`;
}

function target(bar, y, color) {
    return `<circle cx="${bar * STEP}" cy="${y}" r="5" fill="#000" stroke="${color}" stroke-width="1.500"/>
        <circle cx="${bar * STEP}" cy="${y}" r="2" fill="${color}"/>`;
}

function ring(x, y, r) {
    return `<circle cx="${x}" cy="${y}" r="${r}" fill="none" stroke="#ffff30" stroke-width="3"/>`;
}

function svg(content) {
    return `<svg>${content}</svg>`;
}

function scaleLabels(items, top) {
    return svg(items.map(([v, text, kind]) => {
        const y = level(v, top) + 1;
        if (kind === 'zero') {
            return rect(1, y - 7, 9, 14, '#fff') + label(2, y, text) + label(2, y, '0', 'on-tag');
        }
        if (kind) {
            const width = Math.min(63, text.length * 7 + 7);
            return rect(1, y - 7, width, 14, TAGS[kind]) + label(6, y, text, 'on-tag');
        }
        return rect(0, y, 2, 1, '#fff') + label(2, y, text);
    }).join(''));
}

function priceScale(c) {
    const ticks = c.prices.map(([v]) => rect(0, level(v, PRICE_TOP) + 1, 2, 1, '#fff')).join('');
    const labels = c.prices.map(([v, text]) => label(6, level(v, PRICE_TOP) + 1, text)).join('');
    return svg(ticks + labels) + scaleLabels([[c.price, '0.79440', 'white']], PRICE_TOP);
}

function pricePlot(c) {
    let out = hline(level(c.price, PRICE_TOP), 0, '#fff');
    out += `<line x1="${c.cross * STEP + 0.5}" x2="${c.cross * STEP + 0.5}" y1="0" y2="100%" stroke="#f4f46a" stroke-dasharray="4 3"/>`;
    c.bands.forEach(b => { out += line(b, PRICE_TOP, '#7c7c7c', 1, 'stroke-dasharray="3 3"'); });
    c.average.forEach(([color, points]) => {
        out += line(points, PRICE_TOP, AVERAGE[color], 3, 'shape-rendering="crispEdges"');
        if (color === 'g') out += line(points, PRICE_TOP, '#000', 1, 'shape-rendering="crispEdges"');
    });
    c.candles.split(',').forEach((item, i) => {
        if (!item.trim()) return;
        const [dir, ...values] = item.trim().split(' ');
        const [high, top, bottom, low] = values.map(v => level(v, PRICE_TOP));
        const color = dir === 'u' ? UP : DOWN;
        out += `<g opacity="0.75">${rect(i * STEP, high, 1, low - high, color)}</g>`;
        out += rect(i * STEP - 2, top, 5, Math.max(bottom - top, 1), color);
    });
    pairs(c.diamonds).forEach(([b, v]) => {
        const y = level(v, PRICE_TOP);
        out += `<path d="M${b * STEP - 4} ${y}l4-4 4 4-4 4z" fill="#ffff00"/>`;
    });
    pairs(c.buys).forEach(([b, v]) => { out += target(b, level(v, PRICE_TOP), '#20d820'); });
    pairs(c.sells).forEach(([b, v]) => { out += target(b, level(v, PRICE_TOP), '#f0a020'); });
    c.rings.forEach(r => { out += ring(...r); });
    out += '<path d="M363 0h11l-5 6zM3 7h9l-4 5z" fill="#fff"/>';
    out += label(18, 10, c.name);
    out += label(110, 11, c.countdown, 'countdown', 13);
    c.notes.forEach(([x, y, text, cls]) => { out += label(x, y, text, cls, 15); });
    return svg(out);
}

// time labels hang from the bottom of the price plot
function timeLabels(c) {
    const marks = c.times.map(([b, text]) => rect(b * STEP, 10, 1, 4, '#fff') + label(b * STEP, 4, text)).join('');
    return `<div class="times">${svg(marks)}</div>`;
}

const plots = {
    strip(p) {
        return runs(p.runs).map((r, i) => r === '.' ? '' :
            rect(i * STEP - (p.barWidth >> 1), 1, p.barWidth, 10, r === 'r' ? '#f01010' : UP)).join('');
    },
    squares(p) {
        return p.rows.map((row, n) => runs(row).map((r, i) =>
            rect(i * STEP - 2, p.rows.length > 1 ? 4 + n * 6 : 2, 5, p.rows.length > 1 ? 5 : 6, COLORS[r])).join('')).join('');
    },
    levels(p) {
        let out = p.dashed.map(v => hline(level(v, p.top), 0, '#b0b0b0', 1, '4 3')).join('');
        const [colors, values] = p.dots;
        const dotColors = runs(colors);
        values.forEach((v, i) => { out += rect(i * STEP - 3, level(v, p.top) - 3, 5, 5, COLORS[dotColors[i]]); });
        p.hollow.forEach(([cols, points]) => {
            const list = pairs(points);
            runs(cols).forEach((col, i) => {
                if (col === '.') return;
                const next = list.findIndex(q => q[0] >= i);
                const [b1, v1] = list[next];
                const [b0, v0] = list[Math.max(next - 1, 0)];
                const v = b1 === b0 ? v1 : v0 + (v1 - v0) * (i - b0) / (b1 - b0);
                out += `<rect x="${i * STEP - 2.5}" y="${level(v, p.top) - 2.5}" width="4" height="4" fill="none" stroke="${COLORS[col]}"/>`;
            });
        });
        p.marks.forEach(([b, v, n]) => {
            const y = level(v, p.top);
            out += `<circle cx="${b * STEP}" cy="${y}" r="7" fill="none" stroke="#fff"/>` + label(b * STEP, y, n, 'mark');
        });
        pairs(p.turns).forEach(([b, v]) => {
            const y = level(v, p.top);
            out += `<circle cx="${b * STEP}" cy="${y}" r="6" fill="#fff"/>
                <path d="M${b * STEP - 2} ${y - 7}h4v9h-4z" fill="#000"/><path d="M${b * STEP} ${y - 4}v5" stroke="#fff"/>`;
        });
        if (p.ring) out += ring(p.ring[0], level(p.ring[1], p.top), p.ring[2]);
        return out;
    },
    curves(p) {
        return hline(level(p.zero, p.top), p.span, '#fff', 1, '3 3') +
            line(p.blue, p.top, '#3090f0', 3, 'stroke-linejoin="round"') + line(p.red, p.top, '#e01010', 3, 'stroke-linejoin="round"');
    },
    bars(p) {
        const zero = level(p.zero, p.top);
        let out = '';
        p.bars.forEach((v, i) => {
            if (!v) return;
            const y = level(v, p.top);
            const thin = (p.thin || []).some(([a, b]) => i >= a && i <= b);
            const rising = y < zero;
            const color = thin ? (rising ? '#a01c14' : '#3878b8') : (rising ? UP : DOWN);
            out += rect(thin ? i * STEP : i * STEP - 2, Math.min(y, zero), thin ? 1 : 5, Math.max(Math.abs(y - zero), 1), color);
        });
        out += hline(zero, p.span, '#fff');
        (p.dashed || []).forEach(v => { out += hline(level(v, p.top), p.span, '#f0f060', 1, '4 3'); });
        (p.yellow || []).forEach(v => { out += hline(level(v, p.top) + 1, p.span, '#f8f050', 2); });
        (p.green || []).forEach(v => { out += hline(level(v, p.top), p.span, '#48c848', 2); });
        (p.purple || []).forEach(([v, w]) => { out += hline(level(v, p.top), p.span, '#9010c4', w); });
        if (p.corner) out += `<path d="M0 ${p.height - 9}l7 7h-7z" fill="#fff"/>`;
        return out;
    }
};

function controls(p) {
    if (!p.buttons) return '';
    const items = p.buttons.map(b =>
        `<button type="button" class="chart-button ${b.endsWith('*') ? 'on' : ''}">${b.replace('*', '')}</button>`).join('');
    return `<div class="controls ${p.stack || ''}">${items}</div>`;
}

function panel(p) {
    const small = p.height < 25;
    const title = `<span class="panel-title">${p.title}</span>`;
    const drawing = svg(`<g shape-rendering="${p.type === 'levels' ? 'auto' : 'crispEdges'}">${plots[p.type](p)}</g>`);
    const buttons = controls(p);
    const stack = p.under ? title + buttons + drawing : drawing + title + buttons;
    let scale = p.scale;
    if (p.type === 'strip') scale = [[9, '0'], [21, '1']];
    if (p.type === 'squares') scale = p.height === 13 ? [[14, '1'], [17, '0.00']] : [[24, '30'], [38, '0']];
    return `<div class="panel ${small ? 'strip' : ''}" style="height:${p.height}px">
        <div class="plot">${stack}</div>
        <div class="scale">${scaleLabels(scale, p.top || 0)}</div>
    </div>`;
}

function draw(c) {
    const tagLeft = c.cross * STEP - 54;
    const dates = c.dates.map(([b, text]) => rect(b * STEP + 1, 0, 1, 3, '#fff') + label(b * STEP, 10, text)).join('');
    document.getElementById(c.id).innerHTML = `
        <div class="panel price">
            <div class="plot">
                ${pricePlot(c)}
                ${timeLabels(c)}
                <span class="pair-name">${c.pair}</span>
                <button type="button" class="chart-button line-sign ${c.lineSign ? 'on' : ''}">LINE SIGN</button>
                <button type="button" class="expand" aria-label="Expand"></button>
                <span class="time-tag" style="left:${tagLeft}px">2025.11.13 07:00</span>
            </div>
            <div class="scale">${priceScale(c)}</div>
        </div>
        <div class="indicators">
            ${c.panels.map(panel).join('')}
            <div class="crosshair" style="left:${c.cross * STEP + 1}px"></div>
        </div>
        <div class="time-axis">${svg(dates)}<span class="time-tag" style="left:${tagLeft}px">2025.11.13 00:00</span></div>`;
}

charts.forEach(draw);
```
